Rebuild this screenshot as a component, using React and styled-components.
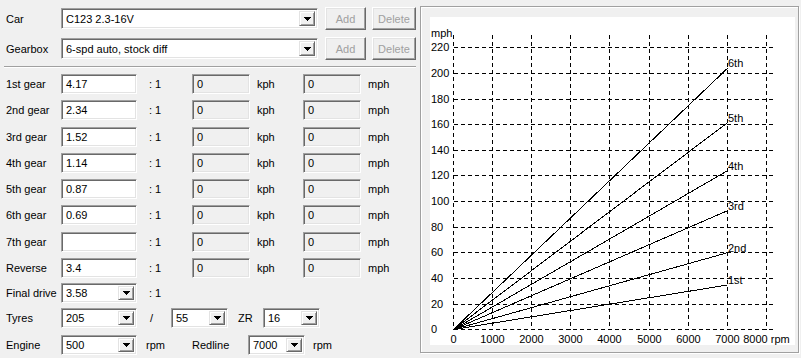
import React from 'react';
import styled, { createGlobalStyle } from 'styled-components';

const Global = createGlobalStyle`
  html, body { margin: 0; padding: 0; background: #f0f0f0; }
  body {
    font-family: "Liberation Sans", Arial, sans-serif;
    font-size: 11px;
    color: #000;
  }
  #root { width: 801px; height: 358px; overflow: hidden; }
`;

const Window = styled.div`
  display: flex;
  width: 801px;
  height: 358px;
  box-sizing: border-box;
`;

const LeftPane = styled.div`
  width: 420px;
  box-sizing: border-box;
  padding: 7px 0 0 6px;
  display: flex;
  flex-direction: column;
`;

const TopRow = styled.div`
  display: flex;
  align-items: center;
  height: 23px;
  margin-top: ${p => p.$mt || 0}px;
`;

const Row = styled.div`
  display: flex;
  align-items: center;
  height: 20px;
  margin-top: ${p => p.$mt}px;
`;

const Label = styled.span`
  width: 55px;
  flex: none;
  white-space: nowrap;
`;

const Cell = styled.span`
  flex: none;
  width: ${p => p.$w}px;
  padding-left: ${p => p.$pl || 0}px;
  box-sizing: border-box;
  white-space: nowrap;
`;

const sunken = `
  box-sizing: border-box;
  border: 1px solid;
  border-color: #a0a0a0 #ffffff #ffffff #a0a0a0;
  box-shadow: inset 1px 1px 0 #696969, inset -1px -1px 0 #e3e3e3;
`;

const TextBox = styled.div`
  ${sunken}
  flex: none;
  width: ${p => p.$w}px;
  height: 20px;
  background: ${p => (p.$disabled ? '#f0f0f0' : '#ffffff')};
  padding: 0 0 0 4px;
  display: flex;
  align-items: center;
  white-space: nowrap;
`;

const Combo = styled.div`
  ${sunken}
  flex: none;
  width: ${p => p.$w}px;
  height: ${p => p.$h || 20}px;
  background: #ffffff;
  padding: 2px 2px 2px 4px;
  display: flex;
  align-items: center;
`;

const ComboText = styled.span`
  flex: 1;
  white-space: nowrap;
  overflow: hidden;
`;

const DropButton = styled.span`
  flex: none;
  box-sizing: border-box;
  width: 16px;
  height: 100%;
  background: #f0f0f0;
  border: 1px solid;
  border-color: #e3e3e3 #696969 #696969 #e3e3e3;
  box-shadow: inset 1px 1px 0 #ffffff, inset -1px -1px 0 #a0a0a0;
  display: flex;
  align-items: center;
  justify-content: center;
`;

const Button = styled.div`
  flex: none;
  box-sizing: border-box;
  width: ${p => p.$w}px;
  height: 23px;
  margin-left: ${p => p.$ml}px;
  background: #f0f0f0;
  border: 1px solid;
  border-color: #ffffff #696969 #696969 #ffffff;
  box-shadow: inset -1px -1px 0 #a0a0a0, inset 1px 1px 0 #e3e3e3;
  color: #a0a0a0;
  display: flex;
  align-items: center;
  justify-content: center;
`;

const Separator = styled.div`
  margin: 6px 0 0 -2px;
  width: 412px;
  height: 1px;
  background: #a0a0a0;
  border-bottom: 1px solid #ffffff;
`;

const ChartGroup = styled.div`
  margin-top: 6px;
  width: 379px;
  height: 347px;
  box-sizing: border-box;
  border: 1px solid #a0a0a0;
  box-shadow: inset 1px 1px 0 #ffffff, 1px 1px 0 #ffffff;
  padding: 10px 2px 6px 9px;
`;

const Canvas = styled.div`
  width: 365px;
  height: 328px;
  background: #ffffff;
`;

const ChartText = styled.text`
  font-family: "Liberation Sans", Arial, sans-serif;
  font-size: 11px;
  fill: #000;
`;

const Arrow = () => (
  <svg width="7" height="4" viewBox="0 0 7 4" shapeRendering="crispEdges">
    <polygon points="0,0 7,0 3.5,4" fill="#000" />
  </svg>
);

const ComboBox = ({ w, h, value }) => (
  <Combo $w={w} $h={h}>
    <ComboText>{value}</ComboText>
    <DropButton>
      <Arrow />
    </DropButton>
  </Combo>
);

const gears = [
  ['1st gear', '4.17'],
  ['2nd gear', '2.34'],
  ['3rd gear', '1.52'],
  ['4th gear', '1.14'],
  ['5th gear', '0.87'],
  ['6th gear', '0.69'],
  ['7th gear', ''],
  ['Reverse', '3.4'],
];

const X0 = 23;
const XS = 39.1;
const Y0 = 312.3;
const YS = 25.636;
const gx = k => Math.round(X0 + k * XS) + 0.5;
const gy = k => Math.round(Y0 - k * YS) + 0.5;

const curves = [
  ['1st', 268],
  ['2nd', 235.7],
  ['3rd', 193.7],
  ['4th', 153.7],
  ['5th', 105.7],
  ['6th', 51.3],
];

const Chart = () => {
  const xs = Array.from({ length: 9 }, (_, k) => k);
  const ys = Array.from({ length: 12 }, (_, k) => k);
  return (
    <svg width="365" height="328" viewBox="0 0 365 328">
      <g stroke="#000" strokeWidth="1" strokeDasharray="4 3" shapeRendering="crispEdges">
        {xs.map(k => (
          <line key={'v' + k} x1={gx(k)} y1={18} x2={gx(k)} y2={gy(0)} />
        ))}
        {ys.map(k => (
          <line key={'h' + k} x1={gx(0)} y1={gy(k)} x2={345} y2={gy(k)} />
        ))}
      </g>
      <g stroke="#000" strokeWidth="1" shapeRendering="crispEdges">
        {curves.map(([n, y]) => (
          <line key={n} x1={gx(0)} y1={gy(0)} x2={gx(7)} y2={y} />
        ))}
      </g>
      {curves.map(([n, y]) => (
        <ChartText key={'l' + n} x={298} y={y - 1}>
          {n}
        </ChartText>
      ))}
      <ChartText x={1} y={20}>mph</ChartText>
      {ys.map(k => (
        <ChartText key={'yl' + k} x={1} y={gy(k) + 3.5}>
          {k * 20}
        </ChartText>
      ))}
      {xs.map(k => (
        <ChartText key={'xl' + k} x={gx(k)} y={326} textAnchor="middle">
          {k === 8 ? '8000 rpm' : k * 1000}
        </ChartText>
      ))}
    </svg>
  );
};

export default function App() {
  return (
    <>
      <Global />
      <Window>
        <LeftPane>
          <TopRow>
            <Label>Car</Label>
            <ComboBox w={257} h={21} value="C123 2.3-16V" />
            <Button $w={41} $ml={7}>Add</Button>
            <Button $w={44} $ml={6}>Delete</Button>
          </TopRow>
          <TopRow $mt={7}>
            <Label>Gearbox</Label>
            <ComboBox w={257} h={21} value="6-spd auto, stock diff" />
            <Button $w={41} $ml={7}>Add</Button>
            <Button $w={44} $ml={6}>Delete</Button>
          </TopRow>
          <Separator />
          {gears.map(([name, ratio], i) => (
            <Row key={name} $mt={i === 0 ? 6 : 6.25}>
              <Label>{name}</Label>
              <TextBox $w={76}>{ratio}</TextBox>
              <Cell $w={55} $pl={12}>: 1</Cell>
              <TextBox $w={58} $disabled>0</TextBox>
              <Cell $w={53} $pl={7}>kph</Cell>
              <TextBox $w={58} $disabled>0</TextBox>
              <Cell $w={50} $pl={7}>mph</Cell>
            </Row>
          ))}
          <Row $mt={5.3}>
            <Label>Final drive</Label>
            <ComboBox w={76} value="3.58" />
            <Cell $w={40} $pl={12}>: 1</Cell>
          </Row>
          <Row $mt={5}>
            <Label>Tyres</Label>
            <ComboBox w={76} value="205" />
            <Cell $w={34} $pl={13}>/</Cell>
            <ComboBox w={57} value="55" />
            <Cell $w={35} $pl={10}>ZR</Cell>
            <ComboBox w={57} value="16" />
          </Row>
          <Row $mt={7}>
            <Label>Engine</Label>
            <ComboBox w={76} value="500" />
            <Cell $w={55} $pl={9}>rpm</Cell>
            <Cell $w={56}>Redline</Cell>
            <ComboBox w={57} value="7000" />
            <Cell $w={40} $pl={8}>rpm</Cell>
          </Row>
        </LeftPane>
        <ChartGroup>
          <Canvas>
            <Chart />
          </Canvas>
        </ChartGroup>
      </Window>
    </>
  );
}
